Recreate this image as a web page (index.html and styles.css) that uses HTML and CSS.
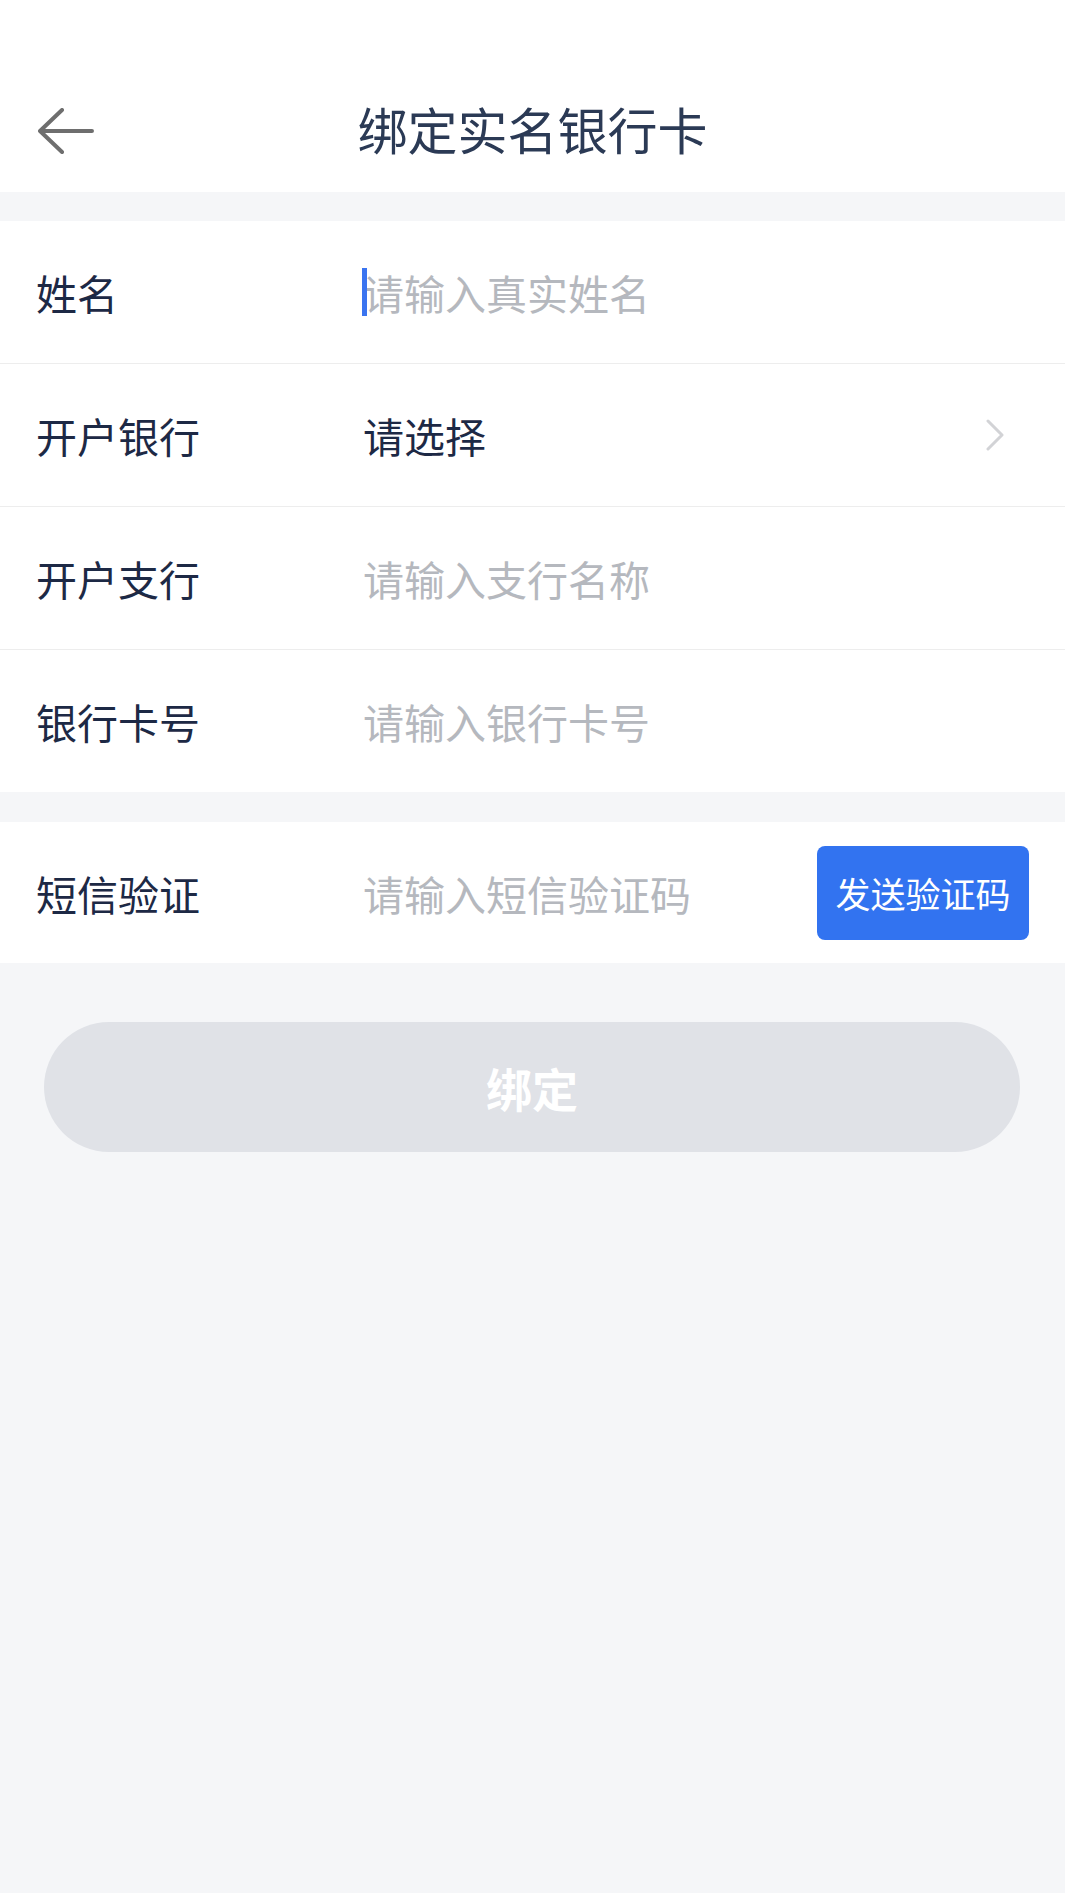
FILE: index.html
```html
<!DOCTYPE html>
<html lang="zh-CN">
<head>
    <meta charset="UTF-8">
    <title>绑定实名银行卡</title>
    <link rel="stylesheet" href="styles.css">
</head>
<body>
    <div class="page">
        <div class="statusbar"></div>
        <div class="navbar">
            <div class="back">
                <svg width="56" height="46" viewBox="0 0 56 46">
                    <path d="M24 2 L2 23 L24 44 M2 23 H54" fill="none" stroke="#6e6e6e" stroke-width="4" stroke-linecap="round" stroke-linejoin="round"/>
                </svg>
            </div>
            <div class="title">绑定实名银行卡</div>
            <div></div>
        </div>

        <div class="group">
            <div class="row">
                <div class="label">姓名</div>
                <div class="field"><span class="caret"></span><span class="placeholder">请输入真实姓名</span></div>
            </div>
            <div class="row">
                <div class="label">开户银行</div>
                <div class="field value">请选择</div>
                <svg class="arrow" width="20" height="32" viewBox="0 0 20 32">
                    <path d="M3 2 L17 16 L3 30" fill="none" stroke="#d2d3d6" stroke-width="3" stroke-linecap="round" stroke-linejoin="round"/>
                </svg>
            </div>
            <div class="row">
                <div class="label">开户支行</div>
                <div class="field"><span class="placeholder">请输入支行名称</span></div>
            </div>
            <div class="row">
                <div class="label">银行卡号</div>
                <div class="field"><span class="placeholder">请输入银行卡号</span></div>
            </div>
        </div>

        <div class="group">
            <div class="row">
                <div class="label">短信验证</div>
                <div class="field"><span class="placeholder">请输入短信验证码</span></div>
                <button class="send">发送验证码</button>
            </div>
        </div>

        <div class="submit">
            <button class="bind">绑定</button>
        </div>
    </div>
</body>
</html>
```

FILE: styles.css
```css
body {
    margin: 0;
    background: #f5f6f8;
    font-family: "Noto Sans CJK SC", "Noto Sans", sans-serif;
    color: #1d2945;
}

.statusbar {
    height: 64px;
    background: #fff;
}

.navbar {
    height: 128px;
    background: #fff;
    display: grid;
    grid-template-columns: 1fr auto 1fr;
    align-items: center;
}

.back {
    padding-left: 38px;
    padding-top: 6px;
    display: flex;
    align-items: center;
}

.title {
    font-size: 50px;
    color: #2b3a55;
}

.group {
    margin-top: 29px;
    background: #fff;
}

.group + .group {
    margin-top: 30px;
}

.row {
    height: 142px;
    display: flex;
    align-items: center;
    border-bottom: 1px solid #ededed;
    font-size: 41px;
}

.row:last-child {
    border-bottom: none;
}

.group + .group .row {
    height: 141px;
}

.label {
    width: 327px;
    padding-left: 36px;
    flex-shrink: 0;
}

.field {
    flex: 1;
    position: relative;
}

.value {
    color: #1d2945;
}

.placeholder {
    color: #b5b8be;
}

.caret {
    position: absolute;
    left: -1px;
    top: 50%;
    margin-top: -24px;
    width: 5px;
    height: 48px;
    background: #3a74f0;
}

.arrow {
    margin-right: 60px;
}

.send {
    margin-right: 36px;
    width: 212px;
    height: 94px;
    border: none;
    border-radius: 8px;
    background: #3273f0;
    color: #fff;
    font-family: inherit;
    font-size: 35px;
    padding: 0;
}

.submit {
    padding: 59px 45px 0 44px;
}

.bind {
    width: 100%;
    height: 130px;
    border: none;
    border-radius: 65px;
    background: #e0e2e7;
    color: #fff;
    font-family: inherit;
    font-size: 46px;
    font-weight: bold;
}
```
